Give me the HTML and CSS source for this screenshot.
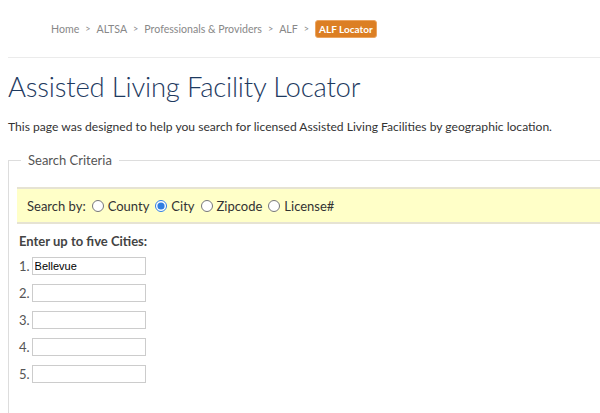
FILE: index.html
```html
<!DOCTYPE html>
<html lang="en">
    <head>
        <meta charset="UTF-8">
        <title>Assisted Living Facility Locator</title>
        <link rel="stylesheet" href="styles.css">
    </head>
    <body>
        <div class="page">
            <nav class="breadcrumb">
                <a href="#">Home</a><span class="sep">&gt;</span>
                <a href="#">ALTSA</a><span class="sep">&gt;</span>
                <a href="#">Professionals &amp; Providers</a><span class="sep">&gt;</span>
                <a href="#">ALF</a><span class="sep">&gt;</span>
                <span class="current">ALF Locator</span>
            </nav>

            <h1>Assisted Living Facility Locator</h1>
            <p class="intro">This page was designed to help you search for licensed Assisted Living Facilities by geographic location.</p>

            <fieldset class="criteria">
                <legend>Search Criteria</legend>
                <div class="search-by">
                    <span>Search by:</span>
                    <label><input type="radio" name="by"> County</label>
                    <label><input type="radio" name="by" checked> City</label>
                    <label><input type="radio" name="by"> Zipcode</label>
                    <label><input type="radio" name="by"> License#</label>
                </div>
                <h4>Enter up to five Cities:</h4>
                <div class="cities">
                    <div class="row"><span>1.</span><input type="text" value="Bellevue"></div>
                    <div class="row"><span>2.</span><input type="text"></div>
                    <div class="row"><span>3.</span><input type="text"></div>
                    <div class="row"><span>4.</span><input type="text"></div>
                    <div class="row"><span>5.</span><input type="text"></div>
                </div>
            </fieldset>
        </div>
    </body>
</html>
```

FILE: styles.css
```css
body {
    margin: 0;
    font-family: "Lato", "Open Sans", sans-serif;
    color: #333;
    background: #fff;
    overflow: hidden;
}
.page {
    padding: 0 0 0 8px;
}
.breadcrumb {
    display: flex;
    align-items: center;
    height: 58px;
    padding-left: 43px;
    font-size: 10.6px;
    color: #888;
    border-bottom: 1px solid #ebebeb;
    box-sizing: border-box;
}
.breadcrumb a {
    color: #888;
    text-decoration: none;
}
.breadcrumb .sep {
    margin: 0 6px;
    font-size: 9px;
}
.current {
    background: #dc7f24;
    color: #fff;
    font-weight: bold;
    font-size: 10px;
    padding: 2px 3px;
    border-radius: 3px;
    border: 1px solid #eba460;
}
h1 {
    margin: 12px 0 0;
    font-size: 27.5px;
    font-weight: 300;
    color: #1e3a5f;
    letter-spacing: -0.2px;
}
.intro {
    margin: 16px 0 0;
    font-size: 12.1px;
}
.criteria {
    margin: 18px 0 0;
    padding: 19px 0 30px 8px;
    border: none;
    border-top: 1px solid #ddd;
    border-left: 1px solid #ddd;
}
.criteria legend {
    padding: 0 7px;
    margin-left: 4px;
    font-size: 13px;
    color: #555;
}
.search-by {
    display: flex;
    align-items: center;
    gap: 4px;
    height: 33px;
    padding-left: 10px;
    background: #ffffc8;
    border-top: 2px solid #e6e3d3;
    border-bottom: 2px solid #e6e3d3;
    font-size: 13px;
}
.search-by label {
    display: flex;
    align-items: center;
    gap: 2px;
}
.search-by input {
    margin: 0 2px;
    width: 12px;
    height: 12px;
    accent-color: #2f7de1;
}
.criteria h4 {
    margin: 9px 0 8px 2px;
    font-size: 13px;
    color: #444;
}
.cities {
    display: flex;
    flex-direction: column;
    gap: 9px;
    padding-left: 2px;
}
.row {
    display: flex;
    align-items: center;
    gap: 2px;
    font-size: 13px;
    color: #555;
}
.row input {
    width: 114px;
    height: 18px;
    box-sizing: border-box;
    border: 1px solid #ccc;
    padding: 0 2px;
    margin: 0;
    font-family: "Liberation Sans", Arial, sans-serif;
    font-size: 11px;
    color: #000;
}
```
